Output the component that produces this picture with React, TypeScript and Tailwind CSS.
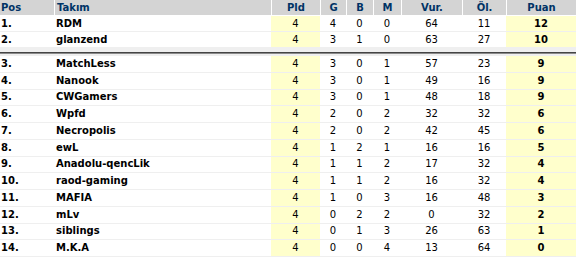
type Row = {
  pos: number;
  team: string;
  pld: number;
  g: number;
  b: number;
  m: number;
  vur: number;
  ol: number;
  puan: number;
};

const top: Row[] = [
  { pos: 1, team: "RDM", pld: 4, g: 4, b: 0, m: 0, vur: 64, ol: 11, puan: 12 },
  { pos: 2, team: "glanzend", pld: 4, g: 3, b: 1, m: 0, vur: 63, ol: 27, puan: 10 },
];

const rest: Row[] = [
  { pos: 3, team: "MatchLess", pld: 4, g: 3, b: 0, m: 1, vur: 57, ol: 23, puan: 9 },
  { pos: 4, team: "Nanook", pld: 4, g: 3, b: 0, m: 1, vur: 49, ol: 16, puan: 9 },
  { pos: 5, team: "CWGamers", pld: 4, g: 3, b: 0, m: 1, vur: 48, ol: 18, puan: 9 },
  { pos: 6, team: "Wpfd", pld: 4, g: 2, b: 0, m: 2, vur: 32, ol: 32, puan: 6 },
  { pos: 7, team: "Necropolis", pld: 4, g: 2, b: 0, m: 2, vur: 42, ol: 45, puan: 6 },
  { pos: 8, team: "ewL", pld: 4, g: 1, b: 2, m: 1, vur: 16, ol: 16, puan: 5 },
  { pos: 9, team: "Anadolu-qencLik", pld: 4, g: 1, b: 1, m: 2, vur: 17, ol: 32, puan: 4 },
  { pos: 10, team: "raod-gaming", pld: 4, g: 1, b: 1, m: 2, vur: 16, ol: 32, puan: 4 },
  { pos: 11, team: "MAFIA", pld: 4, g: 1, b: 0, m: 3, vur: 16, ol: 48, puan: 3 },
  { pos: 12, team: "mLv", pld: 4, g: 0, b: 2, m: 2, vur: 0, ol: 32, puan: 2 },
  { pos: 13, team: "siblings", pld: 4, g: 0, b: 1, m: 3, vur: 26, ol: 63, puan: 1 },
  { pos: 14, team: "M.K.A", pld: 4, g: 0, b: 0, m: 4, vur: 13, ol: 64, puan: 0 },
];

const cols = "grid grid-cols-[54px_217px_49px_26px_27px_28px_61px_44px_70px]";

function TableRow({ row, tall }: { row: Row; tall?: boolean }) {
  return (
    <div className={`${cols} ${tall ? "h-[16.75px]" : "h-[16px]"} border-b border-[#efefef] items-stretch`}>
      <div className="flex items-center pl-px font-bold">{row.pos}.</div>
      <div className="flex items-center pl-[2px] font-bold">{row.team}</div>
      <div className="flex items-center justify-center bg-[#ffffcc]">{row.pld}</div>
      <div className="flex items-center justify-center">{row.g}</div>
      <div className="flex items-center justify-center">{row.b}</div>
      <div className="flex items-center justify-center">{row.m}</div>
      <div className="flex items-center justify-center">{row.vur}</div>
      <div className="flex items-center justify-center">{row.ol}</div>
      <div className="flex items-center justify-center bg-[#ffffcc] font-bold">{row.puan}</div>
    </div>
  );
}

export default function App() {
  return (
    <div className="w-[576px] h-[257px] overflow-hidden bg-white font-['DejaVu_Sans',Verdana,sans-serif] text-[10px] leading-none text-black">
      <div className={`${cols} h-[16px] bg-[#d4d4d4] text-[#003366] font-bold border-b border-white`}>
        <div className="flex items-center pl-px">Pos</div>
        <div className="flex items-center pl-[2px] border-l border-white">Takım</div>
        <div className="flex items-center justify-center border-l border-white">Pld</div>
        <div className="flex items-center justify-center border-l border-white">G</div>
        <div className="flex items-center justify-center border-l border-white">B</div>
        <div className="flex items-center justify-center border-l border-white">M</div>
        <div className="flex items-center justify-center border-l border-white">Vur.</div>
        <div className="flex items-center justify-center border-l border-white">Öl.</div>
        <div className="flex items-center justify-center border-l border-white">Puan</div>
      </div>
      {top.map((r) => (
        <TableRow key={r.pos} row={r} />
      ))}
      <div className="flex flex-col h-[8px]">
        <div className="h-[4px] bg-[#efefef]" />
        <div className="h-px bg-[#444444]" />
        <div className="h-px bg-[#8a8a8a]" />
        <div className="h-[2px] bg-[#efefef]" />
      </div>
      {rest.map((r) => (
        <TableRow key={r.pos} row={r} tall />
      ))}
    </div>
  );
}
